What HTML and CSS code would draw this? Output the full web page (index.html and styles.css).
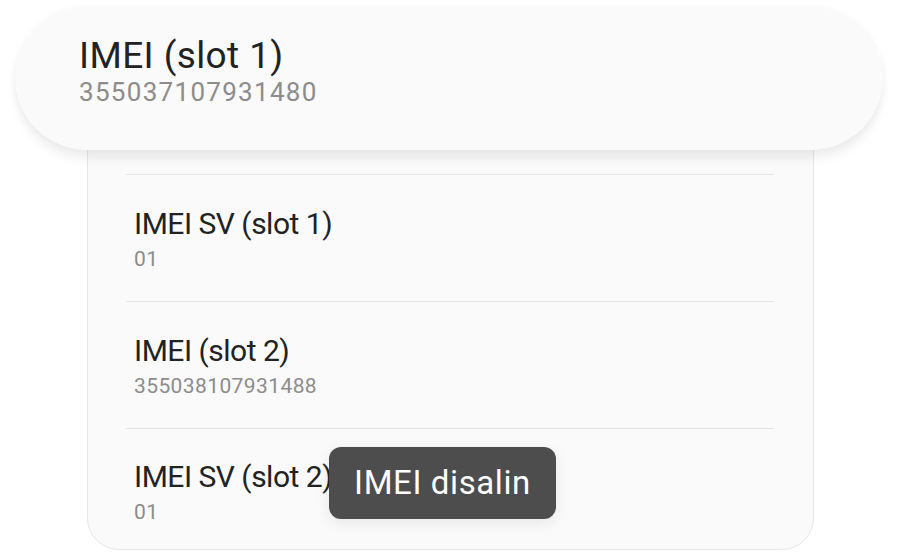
FILE: index.html
```html
<!DOCTYPE html>
<html lang="id">
<head>
<meta charset="utf-8">
<title>IMEI</title>
<link rel="stylesheet" href="styles.css">
</head>
<body>
<div class="screen">
  <div class="card">
    <div class="item item-hidden">
      <div class="title">IMEI (slot 1)</div>
      <div class="sub">355037107931480</div>
    </div>
    <div class="item">
      <div class="title">IMEI SV (slot 1)</div>
      <div class="sub">01</div>
    </div>
    <div class="item">
      <div class="title">IMEI (slot 2)</div>
      <div class="sub">355038107931488</div>
    </div>
    <div class="item item-last">
      <div class="title">IMEI SV (slot 2)</div>
      <div class="sub">01</div>
    </div>
  </div>
  <div class="lifted">
    <div class="lifted-title">IMEI (slot 1)</div>
    <div class="lifted-sub">355037107931480</div>
  </div>
  <div class="toast">IMEI disalin</div>
</div>
</body>
</html>
```
FILE: styles.css
```css
* { box-sizing: border-box; }
html, body {
  margin: 0;
  padding: 0;
  background: #ffffff;
  font-family: Roboto, "Noto Sans", Arial, sans-serif;
}
.screen {
  position: relative;
  width: 900px;
  height: 555px;
  overflow: hidden;
}
.card {
  margin: 47px 0 0 87px;
  width: 727px;
  background: #fafafa;
  border: 1px solid #e6e6e6;
  border-radius: 32px;
  padding: 0 39px 0 38px;
}
.item {
  height: 127px;
  border-top: 1px solid #e4e4e4;
  padding-top: 31px;
}
.item:first-child { border-top: none; height: 126px; }
.item-last { height: 121px; padding-top: 30px; }
.item-hidden { visibility: hidden; }
.title {
  font-size: 30px;
  line-height: 36px;
  letter-spacing: -0.5px;
  color: #222222;
  margin-left: 8px;
}
.sub {
  font-size: 21px;
  line-height: 26px;
  letter-spacing: 0.4px;
  color: #8c8c8c;
  margin-top: 4px;
  margin-left: 8px;
}
.lifted {
  position: absolute;
  left: 15px;
  top: 6px;
  width: 868px;
  height: 144px;
  border-radius: 72px;
  background: #fafafa;
  box-shadow: 0 10px 10px rgba(0, 0, 0, 0.05), 0 2px 8px rgba(0, 0, 0, 0.04);
  padding: 28px 0 0 64px;
}
.lifted-title {
  font-size: 37px;
  line-height: 43px;
  letter-spacing: 0.4px;
  color: #222222;
}
.lifted-sub {
  font-size: 26px;
  line-height: 30px;
  letter-spacing: 1.3px;
  color: #8c8c8c;
}
.toast {
  position: absolute;
  left: 329px;
  top: 447px;
  width: 227px;
  height: 72px;
  border-radius: 12px;
  background: #4d4d4d;
  color: #ffffff;
  font-size: 33px;
  line-height: 72px;
  letter-spacing: 0.6px;
  text-align: center;
  box-shadow: 0 4px 14px rgba(0, 0, 0, 0.08);
}
```
